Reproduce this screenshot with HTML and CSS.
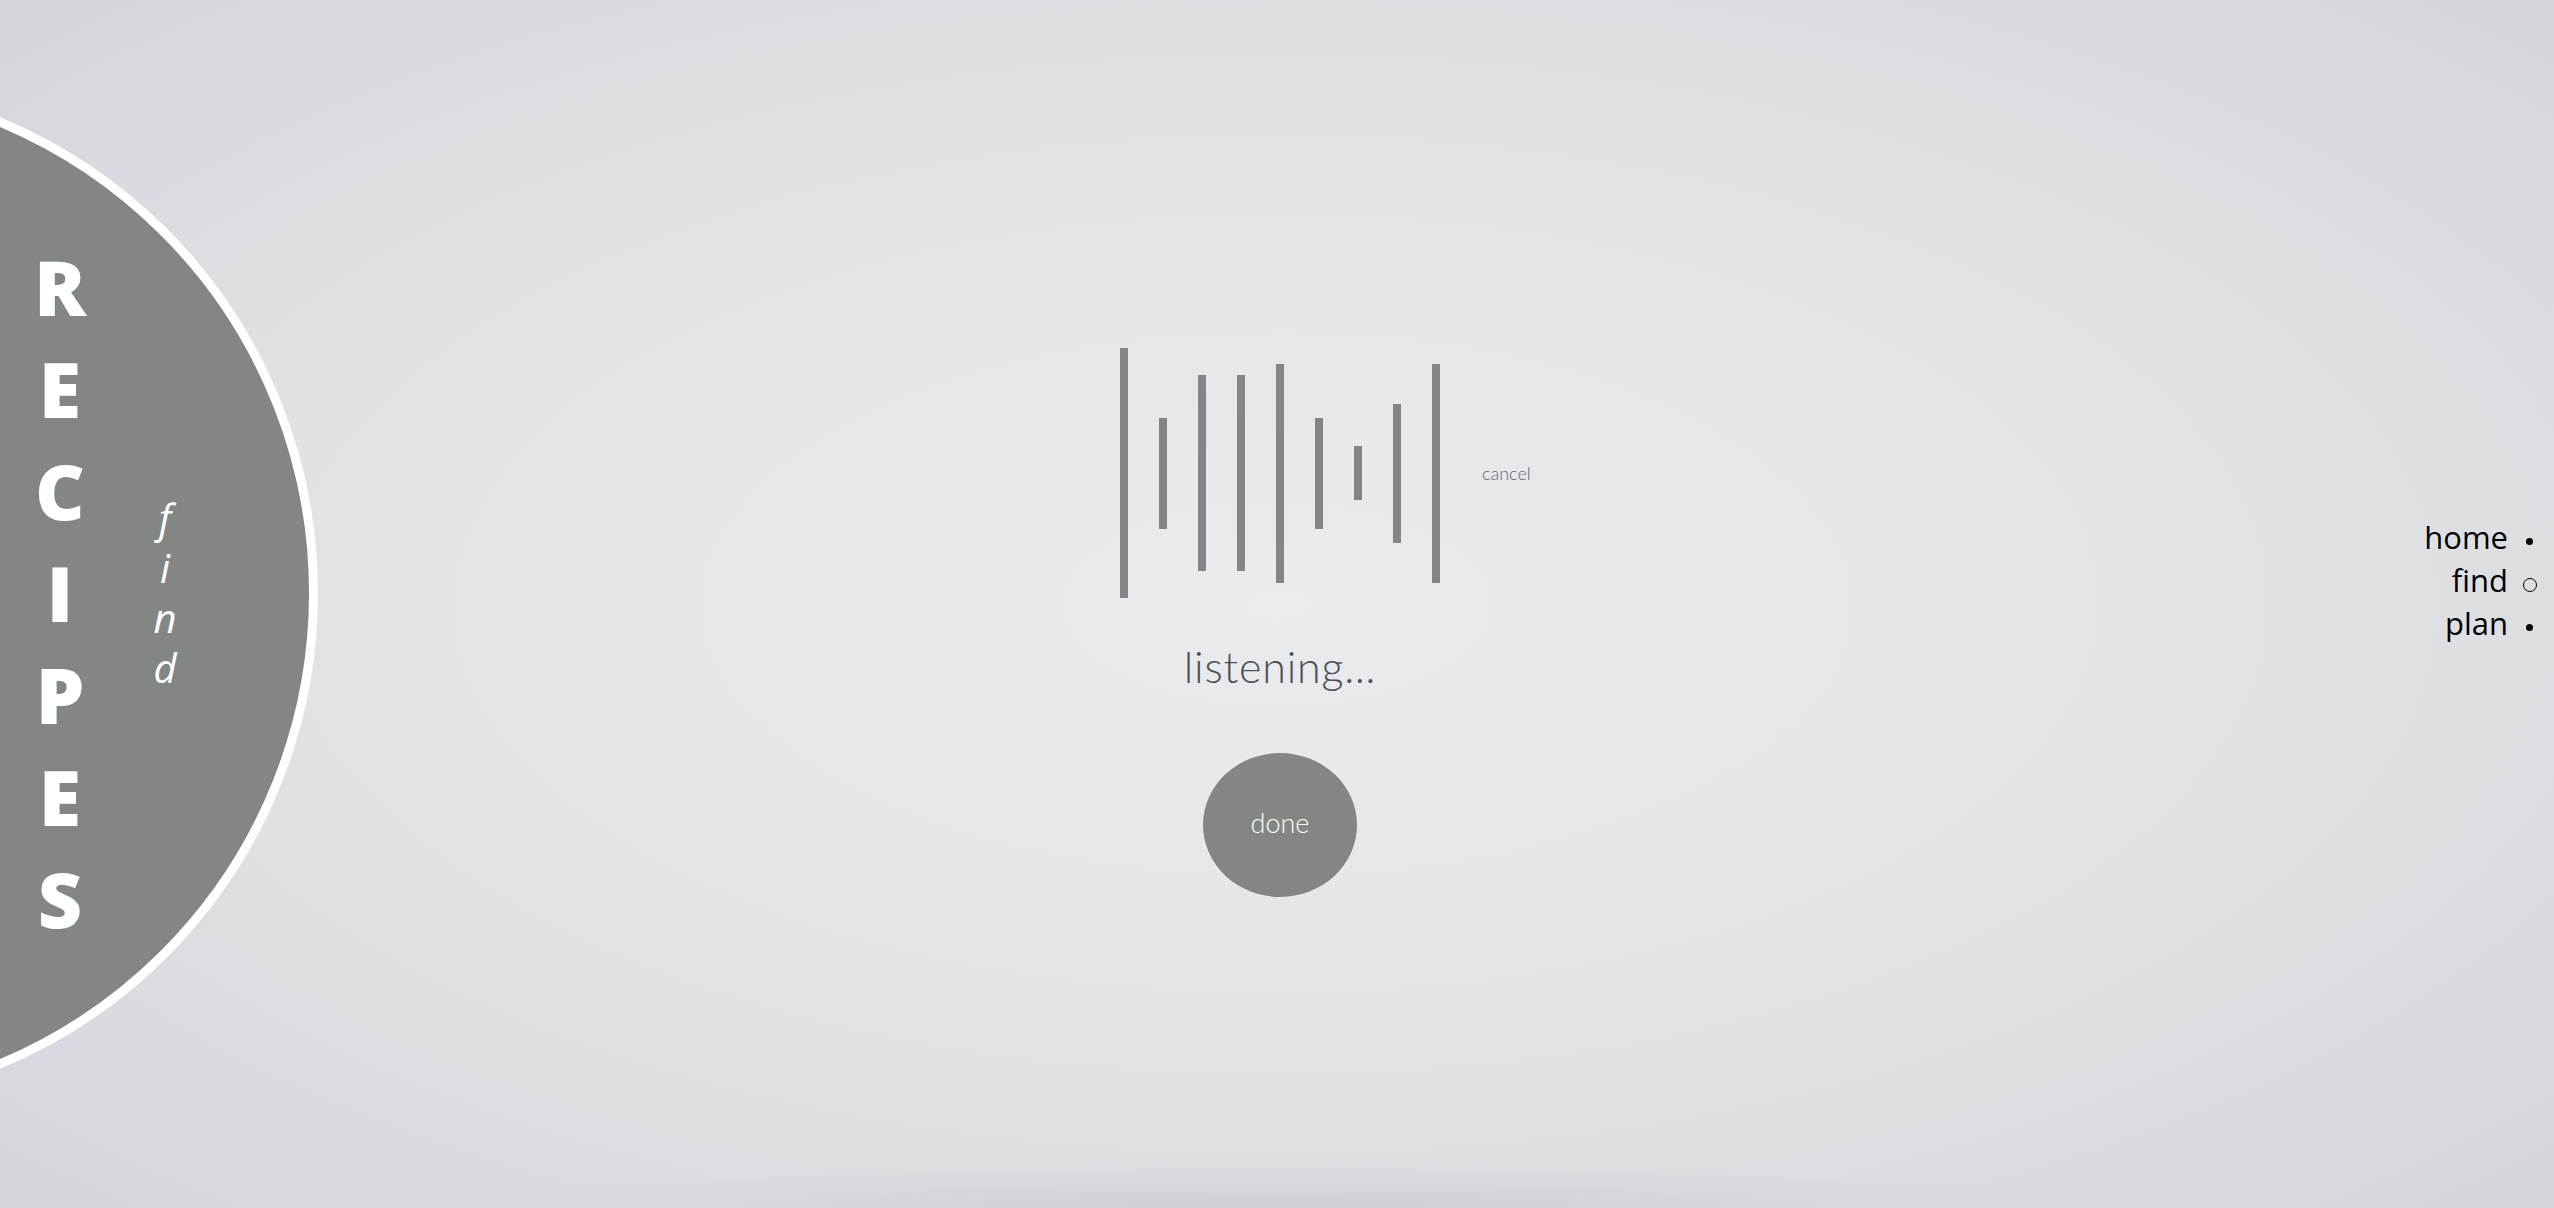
FILE: index.html
```html
<!DOCTYPE html>
<html lang="en">
<head>
<meta charset="utf-8">
<title>Recipes — find</title>
<link rel="stylesheet" href="styles.css">
</head>
<body>
<div class="page">
  <aside class="brand-cell">
    <div class="brand">
      <div class="brand-title">
        <span>R</span><span>E</span><span>C</span><span>I</span><span>P</span><span>E</span><span>S</span>
      </div>
      <div class="brand-sub">
        <span>f</span><span>i</span><span>n</span><span>d</span>
      </div>
    </div>
  </aside>

  <main class="voice">
    <div class="wave-row">
      <div class="wave-side"></div>
      <div class="wave">
        <span class="bar" style="height:250px"></span>
        <span class="bar" style="height:111px"></span>
        <span class="bar" style="height:196px"></span>
        <span class="bar" style="height:196px"></span>
        <span class="bar" style="height:219px"></span>
        <span class="bar" style="height:111px"></span>
        <span class="bar" style="height:54px"></span>
        <span class="bar" style="height:139px"></span>
        <span class="bar" style="height:219px"></span>
      </div>
      <div class="wave-side wave-side-right"><span class="cancel">cancel</span></div>
    </div>
    <p class="status">listening…</p>
    <button class="done" type="button">done</button>
  </main>

  <nav class="nav">
    <div class="nav-item">home<span class="mark mark-dot"></span></div>
    <div class="nav-item">find<span class="mark mark-ring"></span></div>
    <div class="nav-item">plan<span class="mark mark-dot"></span></div>
  </nav>
</div>
</body>
</html>
```

FILE: styles.css
```css
html, body {
  margin: 0;
  padding: 0;
}

body {
  width: 2554px;
  height: 1208px;
  overflow: hidden;
  background:
    radial-gradient(ellipse 760px 46px at 50% 100%, rgba(150, 152, 160, 0.22), rgba(150, 152, 160, 0) 100%),
    radial-gradient(ellipse farthest-corner at 50% 50%, #eaebef 0%, #e5e6ea 40%, #dcdee2 70%, #d2d6db 100%);
  font-family: "Open Sans", "Liberation Sans", sans-serif;
}

.page {
  display: grid;
  grid-template-columns: 1fr auto 1fr;
  align-items: center;
  height: 1208px;
}

/* ---------- brand circle ---------- */
.brand-cell {
  display: flex;
  align-items: center;
  justify-self: start;
}

.brand {
  box-sizing: border-box;
  width: 1030px;
  height: 1030px;
  margin-left: -712px;
  margin-bottom: 22px;
  border: 9px solid #ffffff;
  border-radius: 50%;
  background: #828784;
  display: flex;
  align-items: center;
  padding-left: 723px;
  flex-shrink: 0;
}

.brand-title {
  width: 80px;
  display: flex;
  flex-direction: column;
  align-items: center;
  font-family: "Open Sans", sans-serif;
  font-weight: 800;
  font-size: 77px;
  line-height: 102px;
  color: #ffffff;
}

.brand-sub {
  width: 40px;
  margin-left: 45px;
  display: flex;
  flex-direction: column;
  align-items: center;
  font-family: "Open Sans", sans-serif;
  font-style: italic;
  font-weight: 400;
  font-size: 40px;
  line-height: 50px;
  color: #ffffff;
}

/* ---------- voice panel ---------- */
.voice {
  display: flex;
  flex-direction: column;
  align-items: center;
  margin-top: 37px;
  margin-left: 6px;
}

.wave-row {
  display: grid;
  grid-template-columns: 1fr auto 1fr;
  align-items: center;
}

.wave {
  display: flex;
  align-items: center;
  gap: 31px;
  height: 250px;
}

.bar {
  display: block;
  width: 8px;
  background: #828784;
}

.wave-side-right {
  display: flex;
  align-items: center;
}

.cancel {
  margin-left: 42px;
  font-family: "Lato", sans-serif;
  font-weight: 300;
  font-size: 18px;
  color: #5f6366;
}

.status {
  margin: 44px 0 0;
  font-family: "Lato", sans-serif;
  font-weight: 300;
  font-size: 43px;
  line-height: 50px;
  letter-spacing: 0.8px;
  color: #4c4f52;
}

.done {
  margin-top: 61px;
  width: 154px;
  height: 144px;
  border: none;
  border-radius: 50%;
  background: #828784;
  color: #ffffff;
  font-family: "Lato", sans-serif;
  font-weight: 300;
  font-size: 27px;
  padding: 0 0 6px;
}

/* ---------- nav ---------- */
.nav {
  justify-self: end;
  margin-bottom: 47px;
  padding-right: 17px;
  font-family: "Open Sans", sans-serif;
  font-size: 31px;
  line-height: 43px;
  color: #000000;
  text-align: right;
}

.nav-item {
  white-space: nowrap;
}

.mark {
  display: inline-block;
  box-sizing: border-box;
  margin-left: 15px;
  vertical-align: baseline;
}

.mark-dot {
  width: 7px;
  height: 7px;
  border-radius: 50%;
  background: #000000;
  margin-right: 4px;
  margin-left: 18px;
  margin-bottom: 4px;
}

.mark-ring {
  width: 14px;
  height: 14px;
  border-radius: 50%;
  border: 1.6px solid #000000;
}
```
